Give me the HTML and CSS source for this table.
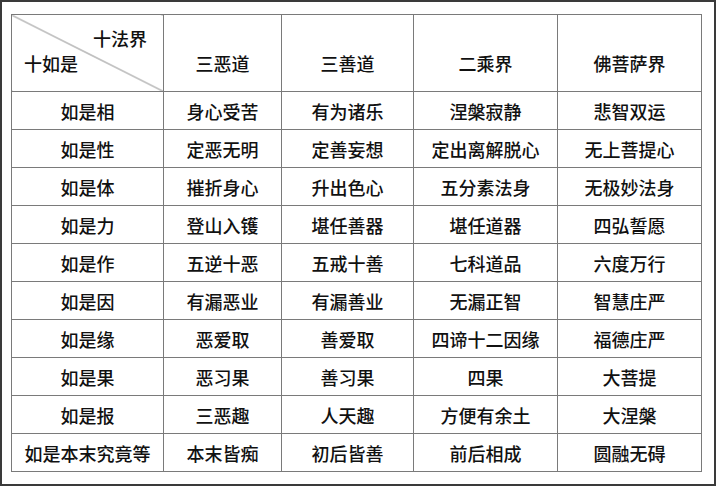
FILE: index.html
```html
<!DOCTYPE html>
<html lang="zh">
<head>
<meta charset="utf-8">
<link rel="stylesheet" href="styles.css">
</head>
<body>
<div class="page">
<table class="grid">
<colgroup>
<col class="c1"><col class="c2"><col class="c3"><col class="c4"><col class="c5">
</colgroup>
<thead>
<tr class="head">
<th class="corner"><div class="corner-in"><span class="top">十法界</span><span class="bottom">十如是</span></div></th>
<th>三恶道</th><th>三善道</th><th>二乘界</th><th>佛菩萨界</th>
</tr>
</thead>
<tbody>
<tr><td>如是相</td><td>身心受苦</td><td>有为诸乐</td><td>涅槃寂静</td><td>悲智双运</td></tr>
<tr><td>如是性</td><td>定恶无明</td><td>定善妄想</td><td>定出离解脱心</td><td>无上菩提心</td></tr>
<tr><td>如是体</td><td>摧折身心</td><td>升出色心</td><td>五分素法身</td><td>无极妙法身</td></tr>
<tr><td>如是力</td><td>登山入镬</td><td>堪任善器</td><td>堪任道器</td><td>四弘誓愿</td></tr>
<tr><td>如是作</td><td>五逆十恶</td><td>五戒十善</td><td>七科道品</td><td>六度万行</td></tr>
<tr><td>如是因</td><td>有漏恶业</td><td>有漏善业</td><td>无漏正智</td><td>智慧庄严</td></tr>
<tr><td>如是缘</td><td>恶爱取</td><td>善爱取</td><td>四谛十二因缘</td><td>福德庄严</td></tr>
<tr><td>如是果</td><td>恶习果</td><td>善习果</td><td>四果</td><td>大菩提</td></tr>
<tr><td>如是报</td><td>三恶趣</td><td>人天趣</td><td>方便有余土</td><td>大涅槃</td></tr>
<tr><td>如是本末究竟等</td><td>本末皆痴</td><td>初后皆善</td><td>前后相成</td><td>圆融无碍</td></tr>
</tbody>
</table>
</div>
</body>
</html>
```
FILE: styles.css
```css
html, body {
  margin: 0;
  padding: 0;
  background: #ffffff;
}
.page {
  box-sizing: border-box;
  width: 716px;
  height: 486px;
  border: 2px solid #3a3a3a;
  padding: 12px 0 0 9px;
  font-family: "Noto Sans CJK SC", sans-serif;
  color: #111;
}
.grid {
  border-collapse: collapse;
  table-layout: fixed;
  width: 691px;
}
.c1 { width: 152px; }
.c2 { width: 118px; }
.c3 { width: 132px; }
.c4 { width: 144px; }
.c5 { width: 144px; }
.grid th, .grid td {
  border: 1px solid #7a7a7a;
  padding: 0;
  text-align: center;
  font-size: 18px;
  font-weight: 500;
  line-height: 24px;
  white-space: nowrap;
}
.grid tbody tr { height: 38px; }
.head { height: 76px; }
.head th {
  vertical-align: bottom;
  padding-bottom: 16px;
}
.head th.corner {
  padding: 0;
  vertical-align: top;
  background: linear-gradient(to top right, transparent calc(50% - 0.8px), #7a7a7a 50%, transparent calc(50% + 0.8px));
}
.corner-in {
  display: flex;
  flex-direction: column;
  height: 76px;
  box-sizing: border-box;
  padding: 11px 16px 0 12px;
}
.corner-in .top { align-self: flex-end; }
.corner-in .bottom { align-self: flex-start; margin-top: 1px; }
```
